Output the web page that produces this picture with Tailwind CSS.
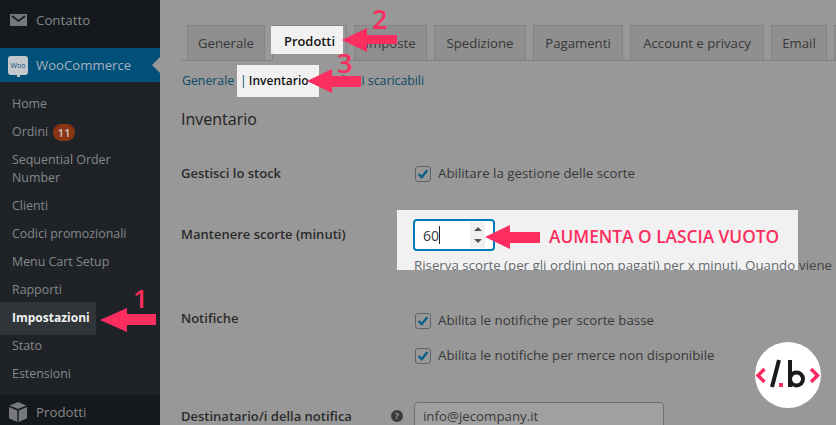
<!DOCTYPE html>
<html lang="it">
<head>
    <meta charset="UTF-8">
    <title>Impostazioni prodotti - Inventario</title>
    <script src="https://cdn.jsdelivr.net/npm/@tailwindcss/browser@4"></script>
</head>
<body class="relative w-[836px] h-[425px] overflow-hidden bg-[#989898] font-['Open_Sans',sans-serif] text-[13px] text-[#393939]">
    <div class="flex h-[425px]">
        <!-- Sidebar -->
        <aside class="w-[160px] shrink-0 flex flex-col bg-[#15191d] text-[#85878a]">
            <div class="h-[48px] flex items-start pt-[11px] pl-[10px] gap-[9px] text-[13.3px]">
                <svg class="w-[17px] h-[18px]" viewBox="0 0 17 18"><path fill="#76787b" d="M0 3h17v12H0z"/><path fill="none" stroke="#15191d" stroke-width="1.600" d="M2 5l6.500 5L15 5"/></svg>
                <span class="leading-[18px]">Contatto</span>
            </div>
            <div class="relative h-[34px] flex items-center pl-[8px] gap-[8px] bg-[#01507a] text-[13.2px] text-[#a3b3bd]">
                <div class="relative w-[20px] h-[19px] rounded-[3px] bg-[#c2c8cc] flex items-center justify-center text-[7px] leading-none text-[#01507a]">
                    Woo
                    <div class="absolute left-[9px] -bottom-[2px] w-[3px] h-[3px] bg-[#c2c8cc]"></div>
                </div>
                <span class="pt-[2px]">WooCommerce</span>
                <div class="absolute right-0 top-[9px] w-0 h-0 border-y-[8px] border-y-transparent border-r-[8px] border-r-[#989898]"></div>
            </div>
            <div class="flex-1 bg-[#1f2327] pt-[8px] text-[12.4px]">
                <div class="h-[28px] leading-[28px] pl-[12px]">Home</div>
                <div class="h-[28px] flex items-center gap-[5px] pl-[12px]">
                    <span>Ordini</span>
                    <span class="w-[22px] h-[17px] rounded-full bg-[#8c3515] text-[#c9c9c9] text-[11px] leading-[17px] text-center font-semibold">11</span>
                </div>
                <div class="py-[5px] pl-[12px] leading-[18px]">Sequential Order<br>Number</div>
                <div class="h-[28px] leading-[28px] pl-[12px]">Clienti</div>
                <div class="h-[28px] leading-[28px] pl-[12px]">Codici promozionali</div>
                <div class="h-[28px] leading-[28px] pl-[12px]">Menu Cart Setup</div>
                <div class="h-[28px] leading-[28px] pl-[12px]">Rapporti</div>
                <div class="w-[96px] h-[33px] -mt-[2px] -mb-[3px] leading-[32px] pl-[12px] bg-[#30353a] text-[12px] text-[#f2f2f2] font-bold">Impostazioni</div>
                <div class="h-[28px] leading-[28px] pl-[12px]">Stato</div>
                <div class="h-[28px] leading-[28px] pl-[12px]">Estensioni</div>
            </div>
            <div class="h-[30px] flex items-start pt-[7px] pl-[9px] gap-[9px] text-[13.3px]">
                <svg class="w-[18px] h-[20px]" viewBox="0 0 18 20"><path fill="#76787b" d="M9 0l8.500 3.500L9 7 .5 3.500zM0 5l8.300 3.400V20L0 16.200zM18 5L9.700 8.400V20l8.300-3.800z"/></svg>
                <span class="leading-[20px]">Prodotti</span>
            </div>
        </aside>

        <!-- Main -->
        <main class="flex-1 min-w-0 pl-[21px] pt-[25px]">
            <nav class="flex gap-[7px] pl-[6px] h-[36px] border-b border-[#848484] text-[13.2px] font-medium text-[#383838]">
                <div class="shrink-0 w-[78px] h-[35px] pt-[2px] bg-[#8f8f8f] border border-b-0 border-[#848484] flex items-center justify-center">Generale</div>
                <div class="shrink-0 w-[75px] h-[36px] pt-[2px] bg-[#989898] border border-b-0 border-[#848484] flex items-center justify-center">Prodotti</div>
                <div class="shrink-0 w-[73px] h-[35px] pt-[2px] bg-[#8f8f8f] border border-b-0 border-[#848484] flex items-center justify-center">Imposte</div>
                <div class="shrink-0 w-[92px] h-[35px] pt-[2px] bg-[#8f8f8f] border border-b-0 border-[#848484] flex items-center justify-center">Spedizione</div>
                <div class="shrink-0 w-[90px] h-[35px] pt-[2px] bg-[#8f8f8f] border border-b-0 border-[#848484] flex items-center justify-center">Pagamenti</div>
                <div class="shrink-0 w-[134px] h-[35px] pt-[2px] bg-[#8f8f8f] border border-b-0 border-[#848484] flex items-center justify-center whitespace-nowrap">Account e privacy</div>
                <div class="shrink-0 w-[56px] h-[35px] pt-[2px] bg-[#8f8f8f] border border-b-0 border-[#848484] flex items-center justify-center">Email</div>
                <div class="shrink-0 w-[20px] h-[35px] bg-[#8f8f8f] border border-b-0 border-[#848484]"></div>
            </nav>

            <div class="flex ml-[1px] mt-[10px] h-[20px] leading-[20px] text-[12.3px] text-[#0a4b66] whitespace-nowrap">
                <span class="w-[58px]">Generale</span>
                <span class="w-[74px] text-[#444]"></span>
                <span class="w-[4px] text-[#444]">|</span>
                <span>Prodotti scaricabili</span>
            </div>

            <h2 class="mt-[18px] text-[16px] leading-[20px] text-[#232323]">Inventario</h2>

            <div class="mt-[35px] flex h-[20px] items-center">
                <div class="w-[234px] font-semibold text-[#2b2b2b]">Gestisci lo stock</div>
                <div class="flex items-center gap-[7px] text-[13.3px]">
                    <svg class="w-[16px] h-[16px]" viewBox="0 0 16 16"><rect x=".5" y=".5" width="15" height="15" rx="2.500" fill="#989898" stroke="#5c646b"/><path fill="none" stroke="#0a5f87" stroke-width="2.400" d="M3.500 8l3.200 3.300 5.600-7"/></svg>
                    <span>Abilitare la gestione delle scorte</span>
                </div>
            </div>

            <div class="mt-[40px] flex">
                <div class="w-[233px] h-[20px] leading-[20px] font-semibold text-[#2b2b2b]">Mantenere scorte (minuti)</div>
            </div>

            <div class="mt-[65px] flex h-[20px] items-center">
                <div class="w-[234px] font-semibold text-[#2b2b2b]">Notifiche</div>
                <div class="flex items-center gap-[7px] mt-[4px] text-[13.3px]">
                    <svg class="w-[16px] h-[16px]" viewBox="0 0 16 16"><rect x=".5" y=".5" width="15" height="15" rx="2.500" fill="#989898" stroke="#5c646b"/><path fill="none" stroke="#0a5f87" stroke-width="2.400" d="M3.500 8l3.200 3.300 5.600-7"/></svg>
                    <span>Abilita le notifiche per scorte basse</span>
                </div>
            </div>
            <div class="mt-[17px] ml-[234px] flex items-center gap-[7px] h-[20px] text-[13.3px]">
                <svg class="w-[16px] h-[16px]" viewBox="0 0 16 16"><rect x=".5" y=".5" width="15" height="15" rx="2.500" fill="#989898" stroke="#5c646b"/><path fill="none" stroke="#0a5f87" stroke-width="2.400" d="M3.500 8l3.200 3.300 5.600-7"/></svg>
                <span>Abilita le notifiche per merce non disponibile</span>
            </div>

            <div class="mt-[36px] flex items-start">
                <div class="w-[210px] pt-[4px] leading-[20px] font-semibold text-[#2b2b2b] whitespace-nowrap">Destinatario/i della notifica</div>
                <div class="w-[23px] pt-[8px]">
                    <div class="w-[12px] h-[12px] rounded-full bg-[#3a3a3a] text-[#989898] text-[9px] leading-[12px] text-center font-bold">?</div>
                </div>
                <div class="w-[250px] h-[30px] pl-[8px] leading-[26px] text-[13.3px] border border-[#6f6f6f] rounded-[4px] bg-[#a0a0a0]">info@jecompany.it</div>
            </div>
        </main>
    </div>

    <!-- Annotazioni sopra lo screenshot -->
    <div class="absolute left-[271px] top-[26px] w-[72px] h-[28px] pl-[13px] bg-[#f1f1f1] text-[12.9px] font-semibold text-[#111] leading-[30px]">Prodotti</div>
    <div class="absolute left-[237px] top-[65px] w-[82px] h-[32px] bg-[#f1f1f1] flex items-center pl-[3px] gap-[2px] text-[#111]">
        <span class="text-[12.3px] text-[#0a4b66]">|</span><span class="text-[12px] font-semibold">Inventario</span>
    </div>
    <div class="absolute left-[397px] top-[210px] w-[401px] h-[60px] overflow-hidden bg-[#f1f1f1] text-[13.3px] text-[#646970]">
        <div class="absolute left-[16px] top-[9px] w-[82px] h-[32px] border-2 border-[#007cba] rounded-[4px] bg-white flex items-center pl-[8px] text-[14px] text-[#32373c]">
            <span>60</span><span class="w-px h-[18px] bg-[#222]"></span>
            <div class="absolute right-[8px] top-[1px] bottom-[1px] w-[15px] bg-[#f0f0f0] flex flex-col items-center justify-center gap-[8px]">
                <div class="w-0 h-0 border-x-[4px] border-x-transparent border-b-[4px] border-b-[#555]"></div>
                <div class="w-0 h-0 border-x-[4px] border-x-transparent border-t-[4px] border-t-[#555]"></div>
            </div>
        </div>
        <div class="absolute left-[17px] top-[46px] whitespace-nowrap leading-[18px]">Riserva scorte (per gli ordini non pagati) per x minuti. Quando</div>
    </div>
    <div class="absolute left-[799px] top-[256px] h-[18px] text-[13.3px] leading-[18px] whitespace-nowrap text-[#444]">viene</div>
    <div class="absolute left-[549px] top-[225px] text-[17.3px] leading-[24px] font-semibold text-[#fb2e5f] whitespace-nowrap">AUMENTA O LASCIA VUOTO</div>

    <svg class="absolute left-0 top-0 pointer-events-none" width="836" height="425" viewBox="0 0 836 425">
        <g fill="#fb2e5f">
            <polygon points="100,320 127,308 127,314 156,314 156,325 127,325 127,332"/>
            <polygon points="342,40 367,28 367,35 397,35 397,44 367,44 367,52"/>
            <polygon points="307,81 332,69 332,76 361,76 361,87 332,87 332,93"/>
            <polygon points="485,237 510,225 510,232 540,232 540,243 510,243 510,249"/>
        </g>
    </svg>
    <div class="absolute left-[133px] top-[280px] text-[26px] leading-[36px] font-semibold text-[#fb2e5f]">1</div>
    <div class="absolute left-[372px] top-[1px] text-[27px] leading-[36px] font-semibold text-[#fb2e5f]">2</div>
    <div class="absolute left-[337px] top-[45px] text-[27px] leading-[36px] font-semibold text-[#fb2e5f]">3</div>

    <!-- Logo -->
    <div class="absolute left-[755px] top-[342px] w-[66px] h-[66px] rounded-full bg-white">
        <svg width="66" height="66" viewBox="0 0 66 66" fill="none">
            <path d="M9.500 27L3 33.500 9.500 40M56 27l6.500 6.500L56 40" stroke="#f72b5f" stroke-width="3.500"/>
            <path d="M24 18l-7 27" stroke="#1b1b1b" stroke-width="4"/>
            <rect x="24" y="41" width="4" height="4" fill="#f72b5f"/>
            <path d="M35 18v27" stroke="#1b1b1b" stroke-width="4"/>
            <circle cx="41.500" cy="37" r="6.500" stroke="#1b1b1b" stroke-width="4"/>
        </svg>
    </div>
</body>
</html>
